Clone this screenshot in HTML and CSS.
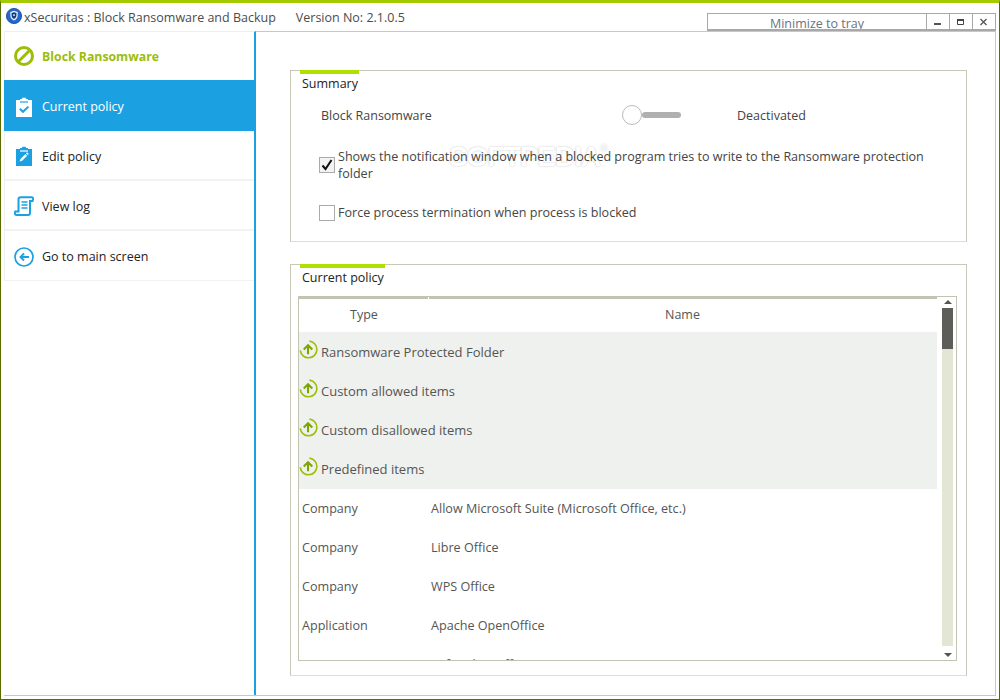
FILE: index.html
```html
<!DOCTYPE html>
<html lang="en">
<head>
<meta charset="utf-8">
<title>xSecuritas : Block Ransomware and Backup</title>
<link rel="stylesheet" href="styles.css">
</head>
<body>
<div class="window">
  <header class="titlebar">
    <svg class="app-icon" viewBox="0 0 16 16"><circle cx="8" cy="8" r="7.600" fill="#1f68cc" stroke="#14418f" stroke-width=".8"/><path d="M8 2.800l3.700 1.300v3.300c0 2.400-1.600 4-3.700 5-2.100-1-3.700-2.600-3.700-5V4.100z" fill="#e6eef8"/><path d="M8 4.200l2.400.8v2.400c0 1.600-1 2.700-2.400 3.500-1.400-.8-2.400-1.900-2.400-3.500V5z" fill="#16357c"/><circle cx="8" cy="7.200" r="1.100" fill="#a9c6ea"/></svg>
    <span class="app-name">xSecuritas : Block Ransomware and Backup</span>
    <span class="version">Version No: 2.1.0.5</span>
    <div class="controls">
      <div class="ctl tray"><span>Minimize to tray</span></div>
      <div class="ctl btn"><svg viewBox="0 0 10 10" class="ctl-icon"><rect x="1" y="6" width="7" height="2" fill="#555"/></svg></div>
      <div class="ctl btn"><svg viewBox="0 0 10 10" class="ctl-icon"><path d="M1.500 2.500h6v5h-6z" fill="none" stroke="#444"/><rect x="1" y="2" width="7" height="2" fill="#444"/></svg></div>
      <div class="ctl btn"><svg viewBox="0 0 10 10" class="ctl-icon"><path d="M1.500 2l6 6M7.500 2l-6 6" stroke="#555" stroke-width="1.300" fill="none"/></svg></div>
    </div>
  </header>
  <div class="frame">
    <nav class="sidebar">
      <div class="nav-head">
        <svg class="nav-icon" viewBox="0 0 20 20"><circle cx="10" cy="10" r="8.500" fill="none" stroke="#9dbd07" stroke-width="3"/><path d="M4.500 15.500L15.500 4.500" stroke="#9dbd07" stroke-width="3"/></svg>
        <span>Block Ransomware</span>
      </div>
      <div class="nav-item active">
        <svg class="nav-icon" viewBox="0 0 20 20"><path d="M2 3h4V2h2.200V.800h3.600V2H14v1h4v17H2z" fill="#fff"/><path d="M6 5h8" stroke="#1ba1e2" stroke-width="1.200"/><path d="M5.800 11.800l3.200 3 5.400-5.200" fill="none" stroke="#1ba1e2" stroke-width="2"/></svg>
        <span>Current policy</span>
      </div>
      <div class="nav-item">
        <svg class="nav-icon" viewBox="0 0 20 20"><path d="M2 3h4V2h2.200V.800h3.600V2H14v1h4v17H2z" fill="#1ba1e2"/><path d="M6 5h8" stroke="#fff" stroke-width="1.200"/><path d="M5.500 15.500l1-2.500 5-5 1.700 1.700-5 5z" fill="#fff"/><path d="M12 7.200l1-1 1.800 1.800-1 1z" fill="#fff"/></svg>
        <span>Edit policy</span>
      </div>
      <div class="nav-item">
        <svg class="nav-icon" viewBox="0 0 20 20"><path d="M4.500 15.500V3.500C4.500 2.200 5.400 1.200 6.700 1.200h11c1.100 0 1.700.9 1.400 2L18.600 5H16v12c0 1.200-.9 2-2 2H2.500c-1.100 0-1.800-.8-1.600-1.900l.3-1.600z" fill="none" stroke="#1ba1e2" stroke-width="2"/><path d="M7.500 6h6M7.500 9h6M7.500 12h6" stroke="#1ba1e2" stroke-width="1.600"/></svg>
        <span>View log</span>
      </div>
      <div class="nav-item">
        <svg class="nav-icon" viewBox="0 0 20 20"><circle cx="10" cy="10" r="9" fill="none" stroke="#1ba1e2" stroke-width="1.700"/><path d="M15 10H7M10 6.500L6.500 10l3.500 3.500" fill="none" stroke="#1ba1e2" stroke-width="1.900"/></svg>
        <span>Go to main screen</span>
      </div>
    </nav>
    <main class="content">
      <section class="panel summary">
        <span class="watermark">SOFTPEDIA<sup>®</sup></span>
        <h2 class="panel-title summary-title">Summary</h2>
        <div class="toggle-row">
          <span class="toggle-label">Block Ransomware</span>
          <span class="toggle"><span class="knob"></span><span class="rail"></span></span>
          <span class="toggle-state">Deactivated</span>
        </div>
        <label class="check-row first">
          <span class="box ticked"><svg viewBox="0 0 14 14"><path d="M2.500 7.500l3 3.500 6-9" fill="none" stroke="#111" stroke-width="2"/></svg></span>
          <span>Shows the notification window when a blocked program tries to write to the Ransomware protection folder</span>
        </label>
        <label class="check-row">
          <span class="box"></span>
          <span>Force process termination when process is blocked</span>
        </label>
      </section>
      <section class="panel policy">
        <h2 class="panel-title policy-title">Current policy</h2>
        <div class="table">
          <div class="rows">
            <div class="bar"><span class="bar-a"></span><span class="bar-b"></span></div>
            <div class="row head"><span class="c1">Type</span><span class="c2">Name</span></div>
            <div class="groups">
              <div class="row group"><svg class="up" viewBox="0 0 20 20"><path d="M11 1.200A8.800 8.800 0 1 1 1.300 11" fill="none" stroke="#9dbd07" stroke-width="1.700"/><path d="M9.500 15V5.500M5 10l4.500-4.500L14 10" fill="none" stroke="#7da600" stroke-width="2.200"/></svg><span>Ransomware Protected Folder</span></div>
              <div class="row group"><svg class="up" viewBox="0 0 20 20"><path d="M11 1.200A8.800 8.800 0 1 1 1.300 11" fill="none" stroke="#9dbd07" stroke-width="1.700"/><path d="M9.500 15V5.500M5 10l4.500-4.500L14 10" fill="none" stroke="#7da600" stroke-width="2.200"/></svg><span>Custom allowed items</span></div>
              <div class="row group"><svg class="up" viewBox="0 0 20 20"><path d="M11 1.200A8.800 8.800 0 1 1 1.300 11" fill="none" stroke="#9dbd07" stroke-width="1.700"/><path d="M9.500 15V5.500M5 10l4.500-4.500L14 10" fill="none" stroke="#7da600" stroke-width="2.200"/></svg><span>Custom disallowed items</span></div>
              <div class="row group"><svg class="up" viewBox="0 0 20 20"><path d="M11 1.200A8.800 8.800 0 1 1 1.300 11" fill="none" stroke="#9dbd07" stroke-width="1.700"/><path d="M9.500 15V5.500M5 10l4.500-4.500L14 10" fill="none" stroke="#7da600" stroke-width="2.200"/></svg><span>Predefined items</span></div>
            </div>
            <div class="row data"><span class="d1">Company</span><span>Allow Microsoft Suite (Microsoft Office, etc.)</span></div>
            <div class="row data"><span class="d1">Company</span><span>Libre Office</span></div>
            <div class="row data"><span class="d1">Company</span><span>WPS Office</span></div>
            <div class="row data"><span class="d1">Application</span><span>Apache OpenOffice</span></div>
            <div class="row data"><span class="d1"></span><span>SoftMaker Office</span></div>
          </div>
          <div class="scrollbar">
            <svg class="arrow" viewBox="0 0 8 4"><path d="M4 0l4 4H0z" fill="#555"/></svg>
            <div class="track"><div class="thumb"></div></div>
            <svg class="arrow" viewBox="0 0 8 4"><path d="M0 0h8L4 4z" fill="#555"/></svg>
          </div>
        </div>
      </section>
    </main>
  </div>
</div>
</body>
</html>
```
FILE: styles.css
```css
* { box-sizing: border-box; }
html, body { margin: 0; padding: 0; background: #fff; }
body { font-family: "Open Sans", "Noto Sans", "Liberation Sans", sans-serif; font-size: 12.5px; color: #333; }
.window { width: 1000px; height: 700px; display: flex; flex-direction: column; border-top: 3px solid #a3cb00; border-left: 1px solid #5a6e00; border-right: 1px solid #5a6e00; border-bottom: 1px solid #5a6e00; overflow: hidden; }
.titlebar { height: 28px; flex: none; display: flex; align-items: flex-start; color: #4c4c4c; padding-left: 5px; }
.app-icon { width: 16px; height: 16px; margin-top: 5px; flex: none; }
.app-name { margin-left: 2px; margin-top: 6px; }
.version { margin-left: 20px; margin-top: 6px; }
.controls { margin-left: auto; margin-right: 3px; margin-top: 10px; display: flex; height: 18px; }
.ctl { border: 1px solid #a8a8a8; border-bottom-width: 2px; background: #fff; margin-left: -1px; overflow: hidden; }
.tray { width: 220px; text-align: center; color: #6a7480; font-size: 12.5px; line-height: 20px; }
.btn { width: 24px; display: flex; align-items: center; justify-content: center; }
.ctl-icon { width: 10px; height: 10px; }
.frame { flex: 1; display: flex; margin: 0 3px 3px 3px; border-right: 1px solid #c8c8c0; border-bottom: 1px solid #c8c8c0; min-height: 0; }
.sidebar { width: 252px; flex: none; border-right: 2px solid #1ba1e2; border-top: 1px solid #eee; }
.nav-head, .nav-item { display: flex; align-items: center; gap: 8px; padding-left: 9px; border-left: 1px solid #eee; color: #222; }
.nav-item { height: 50px; padding-top: 2px; border-bottom: 2px solid #f2f2f2; }
.nav-item:last-child { border-bottom-width: 1px; }
.nav-head { height: 48px; color: #9dbd07; font-weight: 700; font-size: 12.3px; }
.nav-item.active { background: #1ba1e2; color: #fff; height: 51px; border-bottom: none; border-left-color: #1ba1e2; }
.nav-icon { width: 20px; height: 20px; flex: none; }
.content { flex: 1; padding: 38px 28px 0 34px; display: flex; flex-direction: column; border-top: 1px solid #c8c8c0; min-width: 0; }
.panel { border: 1px solid #c8c8b8; position: relative; flex: none; }
.panel-title { margin: 0; font: inherit; color: #222; line-height: 18px; padding-left: 11px; }
.panel-title::before { content: ""; display: block; height: 4px; background: #b0e000; margin: -1px 0 1px -2px; }
.summary-title::before { width: 59px; }
.policy-title::before { width: 85px; }
.summary { height: 172px; border-bottom-color: #ddd; }
.watermark { position: absolute; left: 158px; top: 70px; font: 700 28px "Liberation Sans", sans-serif; letter-spacing: -1px; color: #fff; text-shadow: 0 0 2px rgba(0,0,0,.25); white-space: nowrap; }
.watermark sup { font-size: 10px; font-weight: 400; vertical-align: 14px; line-height: 0; }
.toggle-row, .check-row { position: relative; }
.toggle-row { display: flex; align-items: center; margin: 10px 0 0 30px; height: 24px; }
.toggle-label { width: 301px; color: #444; }
.toggle { display: flex; align-items: center; width: 115px; }
.knob { width: 20px; height: 20px; border: 1px solid #bbb; border-radius: 50%; background: #fff; flex: none; }
.rail { width: 39px; height: 6px; background: #b0b0b0; border-radius: 3px; }
.toggle-state { color: #444; }
.check-row { display: flex; align-items: center; gap: 3px; margin: 22px 30px 0 28px; line-height: 17px; color: #444; font-size: 12.55px; }
.check-row.first { margin-top: 21px; }
.box { width: 16px; height: 16px; border: 1px solid #aaa; flex: none; background: #fff; display: flex; }
.box.ticked { background: #f3f3f3; }
.box svg { width: 14px; height: 14px; }
.policy { margin-top: 22px; height: 412px; border-bottom-color: #ddd; padding: 0 9px 0 7px; }
.policy-title { margin-left: -7px; }
.table { height: 365px; margin-top: 9px; border: 1px solid #c3c3b3; display: flex; overflow: hidden; }
.rows { width: 638px; flex: none; }
.bar { height: 2px; display: flex; gap: 1px; }
.bar-a { width: 129px; background: #c3c3b3; }
.bar-b { flex: 1; background: #c3c3b3; }
.row { height: 39px; display: flex; align-items: center; color: #555; }
.data { font-size: 12.6px; }
.head { height: 33px; padding-bottom: 2px; }
.c1 { margin-left: 51px; width: 315px; }
.groups { background: #eff1ee; padding-bottom: 1px; }
.group { font-size: 13px; }
.up { width: 19px; height: 19px; margin: 0 3px 5px 0; flex: none; }
.d1 { width: 132px; padding-left: 3px; flex: none; }
.scrollbar { flex: 1; display: flex; flex-direction: column; align-items: center; padding: 3px 3px 3px 5px; }
.arrow { width: 8px; height: 4px; flex: none; }
.track { flex: 1; width: 11px; background: #e3e6d5; margin: 4px 0 7px; }
.thumb { height: 41px; background: #5c5e57; }
```
